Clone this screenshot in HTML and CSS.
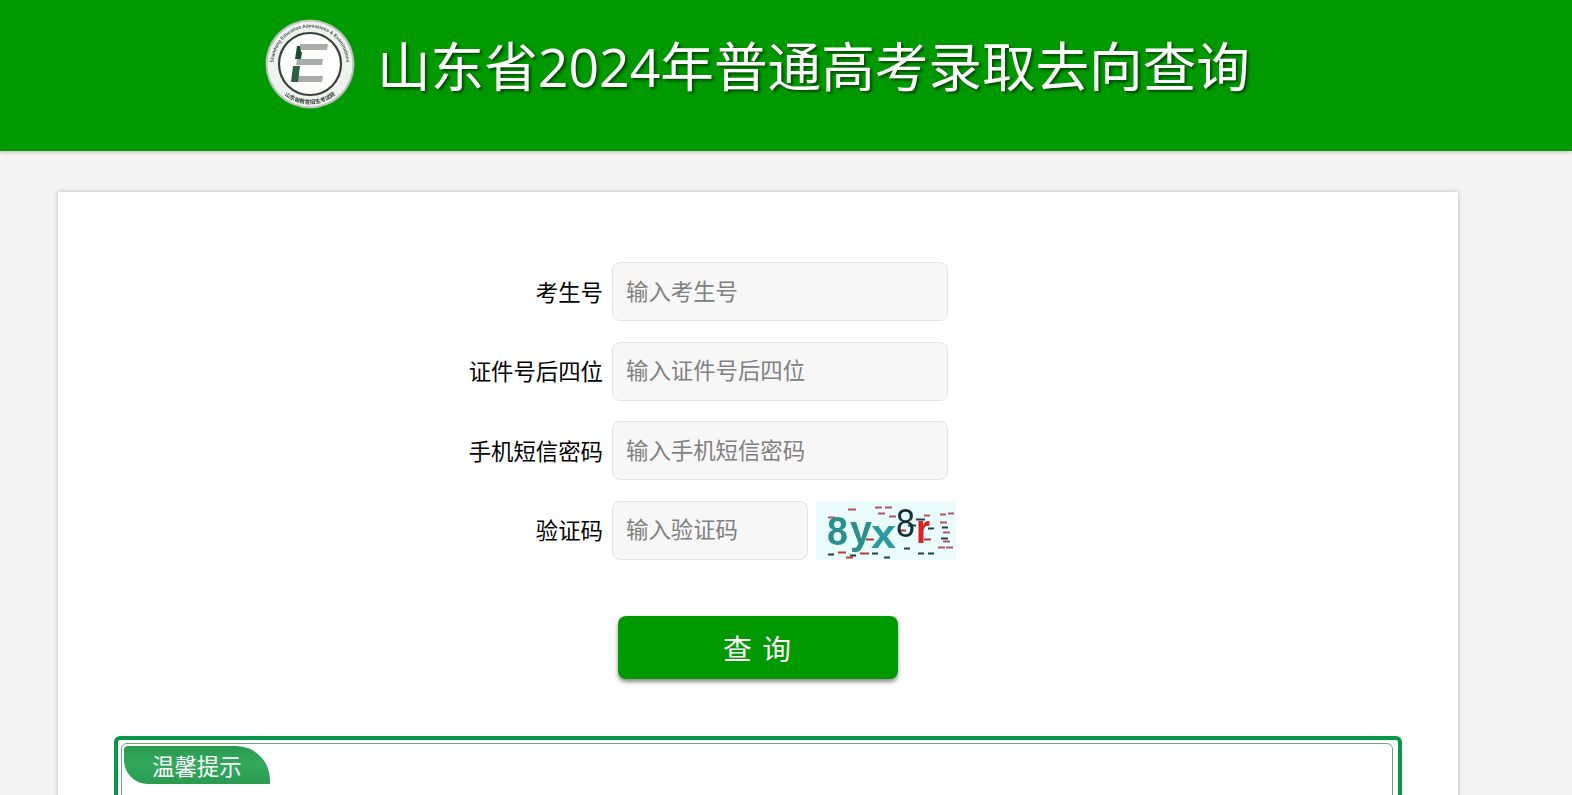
FILE: index.html
```html
<!doctype html>
<html lang="zh-CN">
<head>
  <meta charset="utf-8">
  <title>山东省2024年普通高考录取去向查询</title>
  <link rel="stylesheet" href="styles.css">
</head>
<body>
<header class="top">
  <svg class="logo" viewBox="0 0 90 90" role="img" aria-label="山东省教育招生考试院">
    <defs>
      <path id="ring-top" d="M8.500 45a36.500 36.500 0 0 1 73 0"/>
      <path id="ring-bottom" d="M5 45a40 40 0 0 0 80 0"/>
    </defs>
    <circle cx="45" cy="45" r="44.500" fill="#b9c2b9"/>
    <circle cx="45" cy="45" r="42.500" fill="#eef1ee"/>
    <text class="ring-en"><textPath href="#ring-top" startOffset="50%" text-anchor="middle">Shandong Education Admissions &amp; Examinations</textPath></text>
    <text class="ring-cn"><textPath href="#ring-bottom" startOffset="50%" text-anchor="middle">山东省教育招生考试院</textPath></text>
    <circle cx="45" cy="45" r="31" fill="#fff" stroke="#37423a" stroke-width="2.200"/>
    <path d="M35 25h28l-1 6H34z" fill="#a9aca9"/>
    <path d="M32 40h26l-1 6H31z" fill="#a9aca9"/>
    <path d="M29 57h29l-1 6H28z" fill="#a9aca9"/>
    <path d="M32 27h3l1 6h1l-1 7h-6z" fill="#1c4a2c"/>
    <path d="M28 47h7l-2 16h-7z" fill="#2f5f3f"/>
  </svg>
  <h1>山东省2024年普通高考录取去向查询</h1>
</header>

<main class="card">
  <form class="query">
    <div class="row">
      <label for="ksh">考生号</label>
      <input id="ksh" type="text" placeholder="输入考生号">
    </div>
    <div class="row">
      <label for="zjh">证件号后四位</label>
      <input id="zjh" type="text" placeholder="输入证件号后四位">
    </div>
    <div class="row">
      <label for="sms">手机短信密码</label>
      <input id="sms" type="text" placeholder="输入手机短信密码">
    </div>
    <div class="row">
      <label for="code">验证码</label>
      <input id="code" class="short" type="text" placeholder="输入验证码">
      <svg class="captcha" viewBox="0 0 140 58" role="img" aria-label="验证码图片">
        <rect width="140" height="58" fill="#e9fbfb"/>
        <g stroke-width="2">
          <path d="M32 8h8M59 6h7M69 6h7M62 12h7M73 15h7M12 16h7M108 14h6M124 13h6M132 12h6M124 21h7M127 31h7M127 40h7M122 46h7M130 46h7" stroke="#b0556a"/>
          <path d="M100 18h9M92 24h8M112 27h6M126 26h6M12 53h6M34 54h6M56 52h6M68 56h6M88 47h6M102 52h6M112 52h6M125 37h7" stroke="#23414a"/>
          <path d="M22 51h8M30 56h7M44 52h9M50 38h8M84 29h6M108 38h7" stroke="#b03a3a"/>
        </g>
        <text class="cap cap-a" x="11" y="43" textLength="21" lengthAdjust="spacingAndGlyphs">8</text>
        <text class="cap cap-a" x="34" y="42" textLength="22" lengthAdjust="spacingAndGlyphs">y</text>
        <text class="cap cap-b" x="55" y="46" textLength="25" lengthAdjust="spacingAndGlyphs">x</text>
        <text class="cap cap-c" x="80" y="35" textLength="19" lengthAdjust="spacingAndGlyphs">8</text>
        <text class="cap cap-d" x="100" y="41" textLength="14" lengthAdjust="spacingAndGlyphs">r</text>
      </svg>
    </div>
    <button type="button" class="submit">查 询</button>
  </form>

  <section class="notice">
    <div class="notice-inner">
      <h2>温馨提示</h2>
    </div>
  </section>
</main>
</body>
</html>
```

FILE: styles.css
```css
:root {
  --green: #009900;
  --font: "Noto Sans CJK SC", "Liberation Sans", sans-serif;
}
* {
  box-sizing: border-box;
  margin: 0;
  padding: 0;
}
html, body {
  height: 100%;
  overflow: hidden;
}
body {
  background: #f4f4f4;
  font-family: var(--font);
  color: #000;
}
.top {
  height: 151px;
  padding: 19px 0 0 265px;
  background: var(--green);
  box-shadow: 0 1px 4px rgba(0,0,0,0.25);
  display: flex;
  align-items: flex-start;
  gap: 22px;
}
.logo {
  width: 90px;
  height: 90px;
  flex: none;
  filter: blur(0.4px);
}
.ring-en {
  font: 700 4.700px "Liberation Sans", sans-serif;
  fill: #46524a;
}
.ring-cn {
  font: 700 5.500px var(--font);
  fill: #2e3a32;
}
.top h1 {
  font-family: "Open Sans", var(--font);
  font-size: 53.600px;
  font-weight: 400;
  line-height: 96px;
  color: #fff;
  white-space: nowrap;
  text-shadow: 2px 2px 3px rgba(0,0,0,0.55);
}
.card {
  width: 1400px;
  height: 700px;
  margin: 41px 0 0 58px;
  padding: 70px 56px 0;
  background: #fff;
  box-shadow: 0 0 5px rgba(0,0,0,0.25);
}
.row {
  display: flex;
  align-items: center;
  height: 59px;
  margin-bottom: 20.500px;
}
.row label {
  width: 498px;
  padding-right: 9px;
  font-size: 22.400px;
  text-align: right;
  position: relative;
  top: -1px;
}
.row input {
  width: 336px;
  height: 59px;
  padding: 0 13px 4px;
  background: #f7f7f7;
  border: 1px solid #e4e4e4;
  border-radius: 8px;
  font: 22.400px var(--font);
}
.row input::placeholder {
  color: #808080;
}
.row input.short {
  width: 196px;
}
.captcha {
  width: 140px;
  height: 59px;
  margin-left: 8px;
  filter: blur(0.5px);
}
.cap {
  font: 700 40px "Liberation Sans", sans-serif;
}
.cap-a { fill: #2a8f8f; }
.cap-b { fill: #2b9aa0; }
.cap-c { fill: #12303a; font-weight: 400; }
.cap-d { fill: #e02020; }
.submit {
  display: block;
  width: 280px;
  height: 63px;
  margin: 56px 0 0 504px;
  background: var(--green);
  border: none;
  border-radius: 8px;
  color: #fff;
  font: 28.800px var(--font);
  letter-spacing: 2px;
  box-shadow: 0 3px 4px rgba(0,0,0,0.45);
}
.notice {
  margin-top: 57px;
  height: 300px;
  border: 4px solid #0a9648;
  border-radius: 6px;
  padding: 3px 5px 3px 3px;
  background: #fff;
}
.notice-inner {
  height: 100%;
  border: 1px solid #5fa97d;
  border-radius: 6px;
  padding: 2px;
}
.notice h2 {
  width: 146px;
  height: 38px;
  padding-left: 28px;
  background: linear-gradient(#2a9a50, #31a95b 50%, #2a9a50);
  border-radius: 4px 34px 0 24px;
  color: #fff;
  font-size: 22.400px;
  font-weight: 400;
  line-height: 38px;
}
```
